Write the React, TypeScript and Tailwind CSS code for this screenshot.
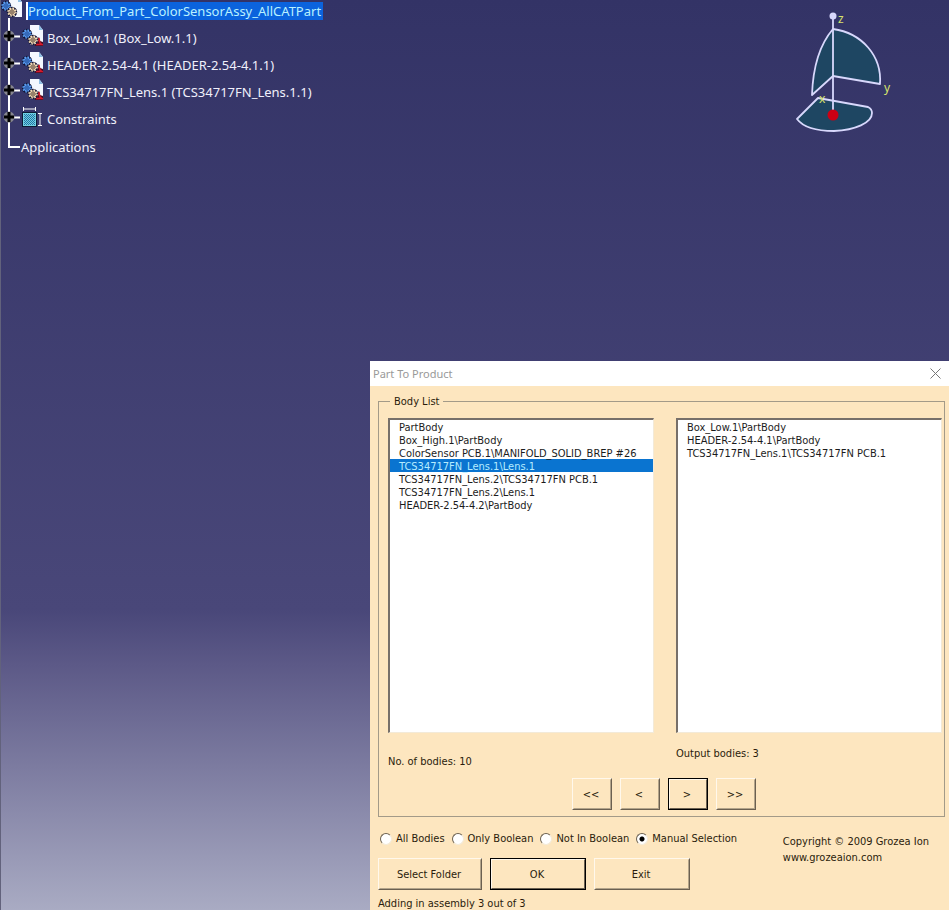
import React, { useState } from 'react';

interface TreeNode {
    label: string;
    kind: 'part' | 'constraints';
}

const treeNodes: TreeNode[] = [
    { label: 'Box_Low.1 (Box_Low.1.1)', kind: 'part' },
    { label: 'HEADER-2.54-4.1 (HEADER-2.54-4.1.1)', kind: 'part' },
    { label: 'TCS34717FN_Lens.1 (TCS34717FN_Lens.1.1)', kind: 'part' },
    { label: 'Constraints', kind: 'constraints' },
];

const inputBodies = [
    'PartBody',
    'Box_High.1\\PartBody',
    'ColorSensor PCB.1\\MANIFOLD_SOLID_BREP #26',
    'TCS34717FN_Lens.1\\Lens.1',
    'TCS34717FN_Lens.2\\TCS34717FN PCB.1',
    'TCS34717FN_Lens.2\\Lens.1',
    'HEADER-2.54-4.2\\PartBody',
];

const outputBodies = [
    'Box_Low.1\\PartBody',
    'HEADER-2.54-4.1\\PartBody',
    'TCS34717FN_Lens.1\\TCS34717FN PCB.1',
];

const modes = ['All Bodies', 'Only Boolean', 'Not In Boolean', 'Manual Selection'];

const Gear = ({ x, y, color, fill }: { x: number; y: number; color: string; fill: string }) => (
    <g transform={`translate(${x} ${y})`}>
        <circle r="5.2" fill="#14163a" />
        <circle r="4" fill="none" stroke={color} strokeWidth="1.4" strokeDasharray="1.6 1.54" />
        <circle r="3.1" fill={fill} stroke={color} strokeWidth="1" />
        <path d="M-2 -1H2M-2 1H2M-1 -2V2M1 -2V2" stroke={color} strokeWidth="0.6" />
    </g>
);

const PartIcon = ({ root = false }: { root?: boolean }) => (
    <svg width="24" height="24" viewBox="0 0 24 24" className="shrink-0" aria-hidden="true">
        <path d="M8 1H17L21 6V21H8Z" fill="#f4f8ff" />
        <path d="M17 1V6H21Z" fill="#8fbfe4" />
        {!root && (
            <>
                <path d="M12 18L17 13L18 17L21 18V22H13Z" fill="#4a0d22" />
                <path d="M14 20L17 15M17 14L18 19L21 21M14 20.5H20" fill="none" stroke="#d81a2c" strokeWidth="1.3" />
            </>
        )}
        <Gear x={5} y={10} color="#5ea4fa" fill="#0d2f78" />
        <Gear x={11} y={16} color="#ffe6bc" fill="#2e1c1c" />
    </svg>
);

const ConstraintsIcon = () => (
    <svg width="24" height="24" viewBox="0 0 24 24" className="shrink-0" aria-hidden="true">
        <rect x="0" y="7" width="15" height="15" fill="#0b1a33" />
        <rect x="1" y="8" width="13" height="13" fill="#6fd0e2" />
        <path d="M2 9.5H13M2 11.5H13M2 13.5H13M2 15.5H13M2 17.5H13M2 19.5H13" stroke="#2574a4" strokeDasharray="1 1" />
        <path d="M3 10.5H13M3 12.5H13M3 14.5H13M3 16.5H13M3 18.5H13" stroke="#2574a4" strokeDasharray="1 1" />
        <path d="M1.5 2V6M13.5 2V6M2 4H13M16 8.5H20M16 20.5H20M18 8.5V20.5" stroke="#ffffff" fill="none" />
    </svg>
);

const Compass = () => (
    <svg width="100" height="130" viewBox="795 5 100 130" className="shrink-0" role="img" aria-label="Compass">
        <g fill="#1e4662" stroke="#d8d8fc" strokeWidth="1.8" strokeLinejoin="round">
            <path d="M833 29C821 43 813 66 812 95L833 76L880 84C882 56 862 33 833 29Z" />
            <path d="M818 98L797 119C803 127 817 131 834 131C855 130 872 123 872 113Q872 109 868 107Z" />
            <path d="M833 17V112" />
        </g>
        <circle cx="833" cy="16" r="3.5" fill="#d8d8fc" />
        <circle cx="833" cy="115" r="5.5" fill="#cc0014" />
        <g fill="#d8e26c" fontSize="12" fontFamily="Noto Sans, sans-serif">
            <text x="838" y="23">z</text>
            <text x="884" y="92">y</text>
            <text x="819" y="103">x</text>
        </g>
    </svg>
);

const PushButton = ({ children, isDefault = false, className }: { children: React.ReactNode; isDefault?: boolean; className: string }) => (
    <button
        type="button"
        className={`h-8 border ${isDefault ? 'border-black' : 'border-t-[#fff8ec] border-l-[#fff8ec] border-r-[#6b6050] border-b-[#6b6050]'} ${className}`}
    >
        <span className={`flex h-full items-center justify-center border pt-px pr-[2px] ${isDefault ? 'border-t-[#fff8ec] border-l-[#fff8ec] border-r-[#6b6050] border-b-[#6b6050]' : 'border-t-[#fde6bf] border-l-[#fde6bf] border-r-[#b3a48a] border-b-[#b3a48a]'}`}>
            {children}
        </span>
    </button>
);

const BodyListBox = ({ label, items, selected, onSelect }: { label: string; items: string[]; selected?: string; onSelect?: (item: string) => void }) => (
    <ul role="listbox" aria-label={label} className="h-[315px] border-t-2 border-l-2 border-r border-b border-t-[#77706a] border-l-[#77706a] border-r-[#f3ead8] border-b-[#f3ead8] bg-white">
        {items.map((item) => (
            <li
                key={item}
                role="option"
                aria-selected={item === selected}
                onClick={() => onSelect?.(item)}
                className={`h-[13px] pt-px pl-[9px] leading-[13px] whitespace-nowrap ${item === selected ? 'bg-[#0a74d0] text-[#b5ecff]' : 'text-[#1c1c1c]'}`}
            >
                {item}
            </li>
        ))}
    </ul>
);

const SpecTree = () => (
    <nav className="text-[13px] leading-[18px] text-[#f0f0fb]" aria-label="Specification tree">
        <div className="flex h-[18px] items-start">
            <div className="-mt-1">
                <PartIcon root />
            </div>
            <span className="mt-[2px] ml-px border-l-2 border-white bg-[#0b63dd] pr-[2px] text-[#b9f1ff]">Product_From_Part_ColorSensorAssy_AllCATPart</span>
        </div>
        <ul className="ml-[7px] border-l-2 border-white pt-[6px]">
            {treeNodes.map((node) => (
                <li key={node.label} className="flex h-[27px] items-center">
                    <button type="button" aria-label={`Expand ${node.label}`} className="-ml-[7px] shrink-0 pb-1">
                        <svg width="19" height="12" viewBox="0 0 19 12">
                            <path d="M11 6.5H17" stroke="#fff" strokeWidth="2" />
                            <circle cx="6" cy="6" r="5.5" fill="#85858f" />
                            <path d="M6 1V11M1 6H11" stroke="#000" strokeWidth="3" />
                        </svg>
                    </button>
                    <span className="shrink-0 pb-1">{node.kind === 'part' ? <PartIcon /> : <ConstraintsIcon />}</span>
                    <span className="ml-px whitespace-nowrap">{node.label}</span>
                </li>
            ))}
            <li className="h-[15px]" />
        </ul>
        <div className="ml-[7px] flex h-0 items-center">
            <span className="h-[2px] w-3 bg-white" />
            <span className="ml-px">Applications</span>
        </div>
    </nav>
);

const PartToProductDialog = () => {
    const [selected, setSelected] = useState('TCS34717FN_Lens.1\\Lens.1');
    const [mode, setMode] = useState('Manual Selection');

    return (
        <section role="dialog" aria-label="Part To Product" className="absolute top-[361px] right-0 bottom-0 left-[369px] overflow-hidden bg-[#fde6bf] font-['DejaVu_Sans_Condensed','DejaVu_Sans',sans-serif] text-[11px] leading-[13px] text-[#2a1c0c]">
            <header className="flex h-[25px] items-center justify-between bg-white pr-2 pl-[3px] font-['Noto_Sans',sans-serif] text-[#999999]">
                <h1>Part To Product</h1>
                <button type="button" aria-label="Close">
                    <svg width="11" height="11" viewBox="0 0 11 11">
                        <path d="M0.5 0.5L10.5 10.5M10.5 0.5L0.5 10.5" stroke="#777" />
                    </svg>
                </button>
            </header>

            <fieldset className="mx-2 mr-1 mt-[9px] h-[422px] border border-[#a39a88] pr-[2px] pl-[9px]">
                <legend className="ml-[2px] px-1">Body List</legend>
                <div className="mt-[10px] grid grid-cols-2 gap-[22px]">
                    <BodyListBox label="Input bodies" items={inputBodies} selected={selected} onSelect={setSelected} />
                    <BodyListBox label="Output bodies" items={outputBodies} />
                </div>
                <div className="mt-[14px] grid grid-cols-2 gap-[22px]">
                    <p className="pt-2">No. of bodies: 10</p>
                    <p>Output bodies: 3</p>
                </div>
                <div className="mt-[10px] flex justify-center gap-2 pr-[2px]">
                    <PushButton className="w-10">&lt;&lt;</PushButton>
                    <PushButton className="w-10">&lt;</PushButton>
                    <PushButton className="w-10" isDefault>&gt;</PushButton>
                    <PushButton className="w-10">&gt;&gt;</PushButton>
                </div>
            </fieldset>

            <div className="mt-[15px] flex justify-between pr-5 pl-2">
                <div>
                    <div className="flex gap-[7px] pl-[2px]">
                        {modes.map((name) => (
                            <label key={name} className="flex items-center gap-1 whitespace-nowrap">
                                <input
                                    type="radio"
                                    name="mode"
                                    checked={mode === name}
                                    onChange={() => setMode(name)}
                                    className="size-3 appearance-none rounded-full border border-t-[#6b6050] border-l-[#6b6050] border-r-[#f3ead8] border-b-[#f3ead8] bg-white checked:bg-[radial-gradient(circle,#000_2px,#fff_3px)]"
                                />
                                {name}
                            </label>
                        ))}
                    </div>
                    <div className="mt-[13px] flex gap-2">
                        <PushButton className="w-[104px]">Select Folder</PushButton>
                        <PushButton className="w-24" isDefault>OK</PushButton>
                        <PushButton className="w-24">Exit</PushButton>
                    </div>
                </div>
                <p className="pt-[2px] leading-4 whitespace-nowrap">
                    Copyright © 2009 Grozea Ion
                    <br />
                    <a href="#">www.grozeaion.com</a>
                </p>
            </div>
            <p className="mt-2 pl-2 leading-[11px]">Adding in assembly 3 out of 3</p>
        </section>
    );
};

export default function App() {
    return (
        <main className="relative h-screen overflow-hidden border-l border-[#62627c] bg-[linear-gradient(#333366_0%,#494779_67%,#5c5987_73%,#a9abc3_100%)] font-['Noto_Sans',sans-serif]">
            <div className="flex items-start justify-between pr-[54px]">
                <SpecTree />
                <div className="pt-[5px]">
                    <Compass />
                </div>
            </div>
            <PartToProductDialog />
        </main>
    );
}
